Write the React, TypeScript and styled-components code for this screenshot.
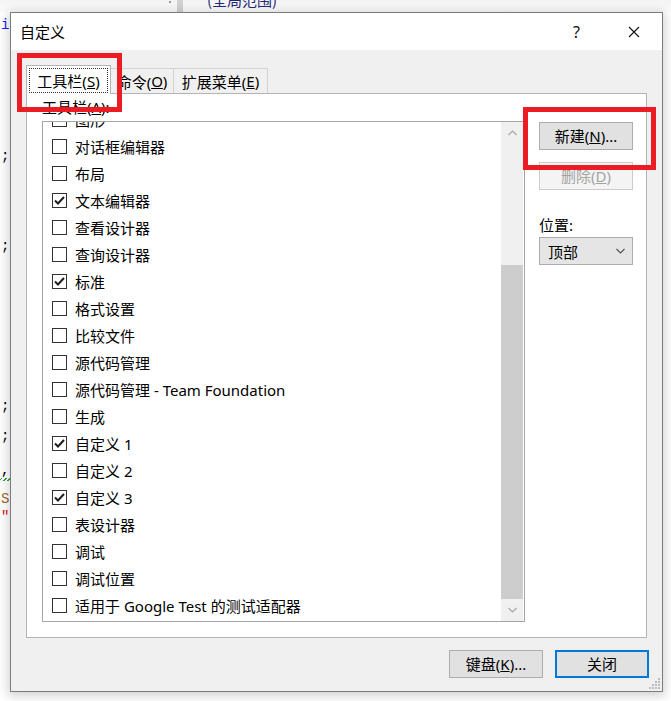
import React from "react";
import styled, { createGlobalStyle } from "styled-components";

const Global = createGlobalStyle`
  html, body { margin: 0; padding: 0; }
  body {
    width: 671px; height: 701px; overflow: hidden; background: #fff;
    font-family: "Noto Sans", "Noto Sans CJK SC", sans-serif;
  }
  * { box-sizing: border-box; }
`;

const UI_FONT = `"Noto Sans", "Noto Sans CJK SC", sans-serif`;

const Page = styled.div`
  position: relative;
  width: 671px;
  height: 701px;
  overflow: hidden;
  background: #fff;
  display: grid;
  grid-template-rows: 12px 1fr;
  grid-template-columns: 10px 1fr;
`;

const TopBar = styled.div`
  grid-column: 1 / 3;
  background: linear-gradient(#f4f4f4, #fbfbfb);
  display: flex;
  align-items: flex-start;
  overflow: hidden;
`;

const TopDot = styled.div`
  width: 2px; height: 2px; background: #9a9a9a;
  margin: 1px 0 0 169px;
`;

const TopSep = styled.div`
  width: 6px; height: 12px; background: #d2d2d2;
  margin-left: 6px;
`;

const ScopeText = styled.span`
  margin: -9px 0 0 24px;
  font: 15px/18px "Noto Sans CJK SC", sans-serif;
  color: #1e2a78;
  white-space: nowrap;
`;

const Gutter = styled.div`
  display: flex;
  flex-direction: column;
  overflow: hidden;
`;

const CodeChar = styled.div<{ $gap: number; $color: string }>`
  margin-top: ${(p) => p.$gap}px;
  height: 14px;
  font: 14px/14px "Liberation Mono", monospace;
  color: ${(p) => p.$color};
  padding-left: 1px;
  white-space: nowrap;
`;

const Squiggle = styled.div`
  height: 3px;
  width: 10px;
  margin-top: 1px;
  background: repeating-linear-gradient(135deg, transparent 0 1px, #3a9a3a 1px 2px, transparent 2px 3px);
`;

const Dialog = styled.div`
  position: absolute;
  left: 10px;
  top: 12px;
  width: 653px;
  height: 680px;
  border: 1px solid #7c7c7c;
  background: #f0f0f0;
  box-shadow: 0 2px 10px 2px rgba(0, 0, 0, 0.18);
  display: flex;
  flex-direction: column;
  font-family: ${UI_FONT};
  font-size: 15px;
  color: #000;
`;

const TitleBar = styled.div`
  height: 37px;
  background: #fff;
  display: flex;
  align-items: center;
  padding-left: 9px;
`;

const Title = styled.span`
  flex: 1;
  font-size: 15px;
  line-height: 20px;
`;

const CaptionButton = styled.div`
  width: 57px;
  height: 37px;
  display: flex;
  align-items: center;
  justify-content: center;
  font-size: 16px;
  color: #111;
`;

const Body = styled.div`
  flex: 1;
  display: flex;
  flex-direction: column;
  padding: 15px 15px 13px 15px;
`;

const TabRow = styled.div`
  height: 28px;
  display: flex;
  align-items: flex-end;
`;

const Tab = styled.div<{ $w: number; $active?: boolean; $first?: boolean }>`
  position: relative;
  z-index: ${(p) => (p.$active ? 2 : 1)};
  width: ${(p) => p.$w}px;
  height: ${(p) => (p.$active ? 29 : 25)}px;
  margin-left: ${(p) => (p.$first ? 0 : -1)}px;
  margin-bottom: ${(p) => (p.$active ? -1 : 0)}px;
  background: ${(p) => (p.$active ? "#fff" : "#f0f0f0")};
  border: 1px solid ${(p) => (p.$active ? "#b4b4b4" : "#d3d3d3")};
  border-bottom: none;
  display: flex;
  align-items: center;
  justify-content: center;
  font-size: 15px;
  padding: ${(p) => (p.$active ? "1px 1px 0" : "0")};
`;

const FocusText = styled.span`
  flex: 1;
  align-self: stretch;
  margin: 1px 1px 1px;
  border: 1px dotted #333;
  display: flex;
  align-items: center;
  justify-content: center;
`;

const Pane = styled.div`
  height: 545px;
  background: #fff;
  border: 1px solid #b4b4b4;
  padding-left: 15px;
  display: flex;
  flex-direction: column;
`;

const FieldLabel = styled.div`
  height: 27px;
  line-height: 27px;
  font-size: 15px;
`;

const PaneRow = styled.div`
  display: flex;
  gap: 14px;
  align-items: flex-start;
`;

const ListBox = styled.div`
  width: 483px;
  height: 501px;
  border: 1px solid #a5a5a5;
  display: flex;
  padding-right: 1px;
`;

const Items = styled.div`
  flex: 1;
  overflow: hidden;
  padding-left: 9px;
`;

const ItemsInner = styled.div`
  margin-top: -16px;
  display: flex;
  flex-direction: column;
`;

const Row = styled.div`
  height: 27px;
  display: flex;
  align-items: center;
  gap: 8px;
  white-space: nowrap;
`;

const Box = styled.div`
  width: 15px;
  height: 15px;
  border: 1px solid #333;
  background: #fff;
  display: flex;
  align-items: center;
  justify-content: center;
  flex-shrink: 0;
`;

const ItemText = styled.span`
  font-size: 15px;
  line-height: 20px;
`;

const ScrollBar = styled.div`
  width: 22px;
  background: #f0f0f0;
  display: flex;
  flex-direction: column;
`;

const ScrollArrow = styled.div`
  height: 22px;
  display: flex;
  align-items: center;
  justify-content: center;
`;

const Track = styled.div`
  flex: 1;
  display: flex;
  flex-direction: column;
  justify-content: flex-end;
`;

const Thumb = styled.div`
  background: #cdcdcd;
`;

const Side = styled.div`
  width: 94px;
  margin-top: 1px;
  display: flex;
  flex-direction: column;
`;

const Button = styled.div<{ $disabled?: boolean; $default?: boolean }>`
  width: 94px;
  height: 28px;
  background: ${(p) => (p.$disabled ? "#f4f4f4" : "#e1e1e1")};
  border: ${(p) => (p.$default ? "2px solid #0078d7" : p.$disabled ? "1px solid #cccccc" : "1px solid #adadad")};
  color: ${(p) => (p.$disabled ? "#a3a3a3" : "#000")};
  display: flex;
  align-items: center;
  justify-content: center;
  font-size: 15px;
  line-height: 20px;
`;

const SideGap = styled.div`
  height: 12px;
`;

const SideLabel = styled.div`
  margin-top: 24px;
  height: 23px;
  line-height: 22px;
  font-size: 15px;
`;

const Select = styled.div`
  width: 94px;
  height: 28px;
  background: #e5e5e5;
  border: 1px solid #acacac;
  display: flex;
  align-items: center;
  justify-content: space-between;
  padding: 0 7px 0 8px;
  font-size: 15px;
`;

const ButtonRow = styled.div`
  margin-top: 12px;
  margin-right: -2px;
  display: flex;
  justify-content: flex-end;
  gap: 12px;
`;

const Grip = styled.svg`
  position: absolute;
  right: 1px;
  bottom: 1px;
`;

const Callout = styled.div<{ $x: number; $y: number; $w: number; $h: number }>`
  position: absolute;
  left: ${(p) => p.$x}px;
  top: ${(p) => p.$y}px;
  width: ${(p) => p.$w}px;
  height: ${(p) => p.$h}px;
  border: 5px solid #ec1c24;
  z-index: 10;
`;

const items: [string, boolean][] = [
  ["图形", false],
  ["对话框编辑器", false],
  ["布局", false],
  ["文本编辑器", true],
  ["查看设计器", false],
  ["查询设计器", false],
  ["标准", true],
  ["格式设置", false],
  ["比较文件", false],
  ["源代码管理", false],
  ["源代码管理 - Team Foundation", false],
  ["生成", false],
  ["自定义 1", true],
  ["自定义 2", false],
  ["自定义 3", true],
  ["表设计器", false],
  ["调试", false],
  ["调试位置", false],
  ["适用于 Google Test 的测试适配器", false],
];

const codeChars: { gap: number; ch: string; color: string; squiggle?: boolean }[] = [
  { gap: 6, ch: "i", color: "#1a1aff" },
  { gap: 117, ch: ";", color: "#000" },
  { gap: 76, ch: ";", color: "#000" },
  { gap: 146, ch: ";", color: "#000" },
  { gap: 16, ch: ";", color: "#000" },
  { gap: 20, ch: ",", color: "#000", squiggle: true },
  { gap: 11, ch: "S", color: "#9b6a2b" },
  { gap: 4, ch: "″", color: "#e01010" },
];

const Check = () => (
  <svg width="13" height="13" viewBox="0 0 13 13">
    <polyline points="2,6.5 5,9.5 11,3" fill="none" stroke="#1e1e1e" strokeWidth="2" />
  </svg>
);

const Chevron = ({ up, color }: { up?: boolean; color: string }) => (
  <svg width="9" height="6" viewBox="0 0 9 6">
    <polyline
      points={up ? "0.5,5 4.5,1 8.5,5" : "0.5,1 4.5,5 8.5,1"}
      fill="none"
      stroke={color}
      strokeWidth="1.2"
    />
  </svg>
);

export default function App() {
  return (
    <Page lang="zh-CN">
      <Global />
      <TopBar>
        <TopDot />
        <TopSep />
        <ScopeText>(全局范围)</ScopeText>
      </TopBar>
      <Gutter>
        {codeChars.map((c, i) => (
          <React.Fragment key={i}>
            <CodeChar $gap={c.gap} $color={c.color}>
              {c.ch}
            </CodeChar>
            {c.squiggle && <Squiggle />}
          </React.Fragment>
        ))}
      </Gutter>
      <div />

      <Dialog>
        <TitleBar>
          <Title>自定义</Title>
          <CaptionButton>?</CaptionButton>
          <CaptionButton>
            <svg width="12" height="12" viewBox="0 0 12 12">
              <path d="M1 1 L11 11 M11 1 L1 11" stroke="#111" strokeWidth="1.1" />
            </svg>
          </CaptionButton>
        </TitleBar>
        <Body>
          <TabRow>
            <Tab $w={85} $active $first>
              <FocusText>
                工具栏(<u>S</u>)
              </FocusText>
            </Tab>
            <Tab $w={64}>
              命令(<u>O</u>)
            </Tab>
            <Tab $w={95}>
              扩展菜单(<u>E</u>)
            </Tab>
          </TabRow>
          <Pane>
            <FieldLabel>
              工具栏(<u>A</u>):
            </FieldLabel>
            <PaneRow>
              <ListBox>
                <Items>
                  <ItemsInner>
                    {items.map(([label, checked]) => (
                      <Row key={label}>
                        <Box>{checked && <Check />}</Box>
                        <ItemText>{label}</ItemText>
                      </Row>
                    ))}
                  </ItemsInner>
                </Items>
                <ScrollBar>
                  <ScrollArrow>
                    <Chevron up color="#a6a6a6" />
                  </ScrollArrow>
                  <Track>
                    <Thumb style={{ height: 334 }} />
                  </Track>
                  <ScrollArrow>
                    <Chevron color="#a6a6a6" />
                  </ScrollArrow>
                </ScrollBar>
              </ListBox>
              <Side>
                <Button>
                  新建(<u>N</u>)...
                </Button>
                <SideGap />
                <Button $disabled>
                  删除(<u>D</u>)
                </Button>
                <SideLabel>位置:</SideLabel>
                <Select>
                  <span>顶部</span>
                  <Chevron color="#555" />
                </Select>
              </Side>
            </PaneRow>
          </Pane>
          <ButtonRow>
            <Button>
              键盘(<u>K</u>)...
            </Button>
            <Button $default>关闭</Button>
          </ButtonRow>
        </Body>
        <Grip width="13" height="13" viewBox="0 0 13 13">
          {[
            [10, 1],
            [7, 4], [10, 4],
            [4, 7], [7, 7], [10, 7],
            [1, 10], [4, 10], [7, 10], [10, 10],
          ].map(([x, y], i) => (
            <rect key={i} x={x} y={y} width="2" height="2" fill="#bcbcbc" />
          ))}
        </Grip>
      </Dialog>

      <Callout $x={17} $y={53} $w={105} $h={59} />
      <Callout $x={523} $y={107} $w={133} $h={63} />
    </Page>
  );
}
